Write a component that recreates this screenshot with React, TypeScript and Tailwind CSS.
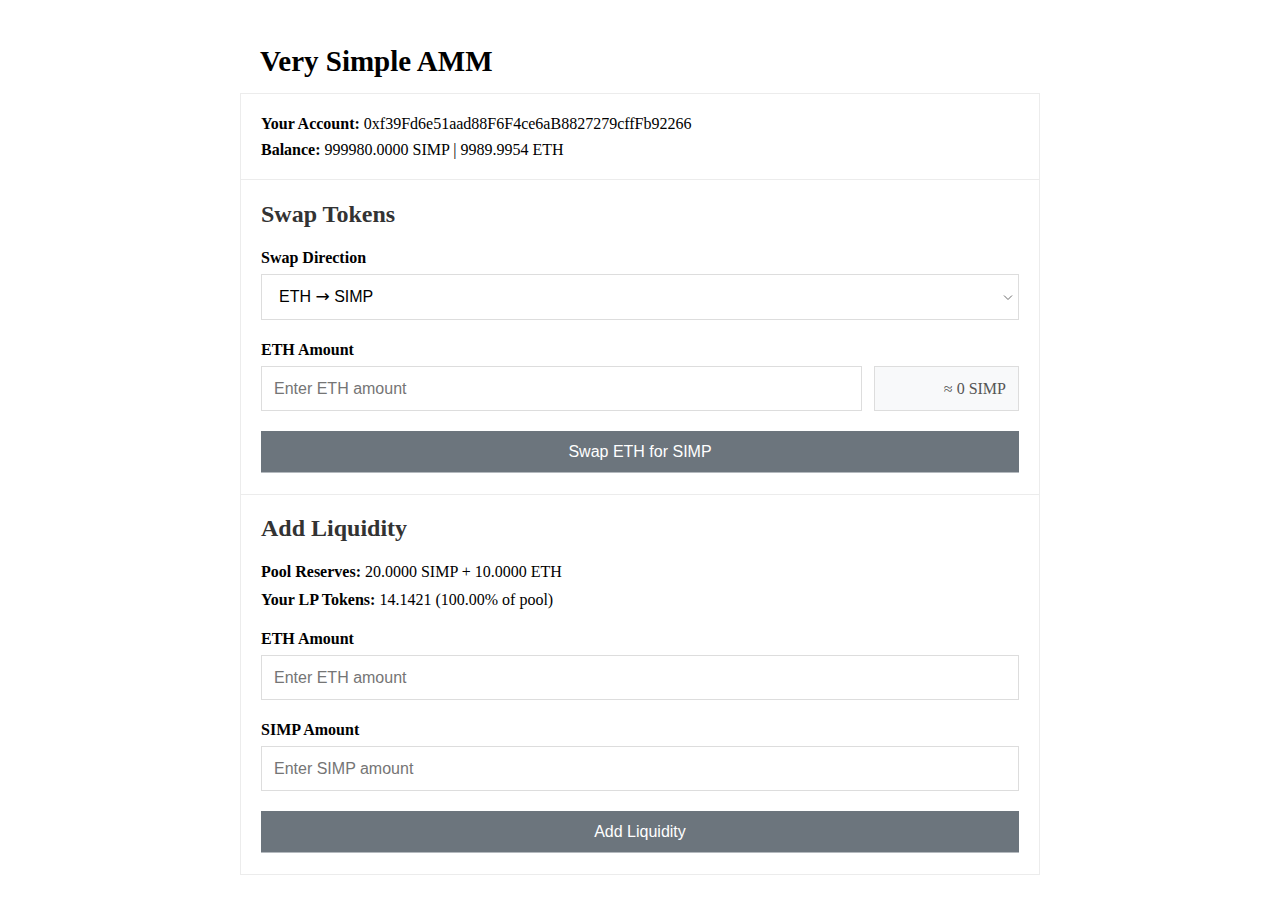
import React from "react";

const serif = "font-['Liberation_Serif','Times_New_Roman',serif]";
const sans = "font-['Liberation_Sans',Arial,sans-serif]";

function Label({ children }: { children: React.ReactNode }) {
  return (
    <label className={`block ${serif} text-[16px] leading-[22px] font-bold text-black mb-[5px]`}>
      {children}
    </label>
  );
}

function TextInput({ placeholder }: { placeholder: string }) {
  return (
    <input
      type="text"
      placeholder={placeholder}
      className={`block w-full h-[45px] px-[12px] border border-[#dddddd] bg-white ${sans} text-[16px] text-black placeholder:text-[#757575] outline-none`}
    />
  );
}

function Button({ children }: { children: React.ReactNode }) {
  return (
    <button
      className={`block w-full h-[42px] bg-[#6c757d] border-b border-b-[#b4b9be] ${sans} text-[16px] text-white text-center`}
    >
      {children}
    </button>
  );
}

export default function App() {
  return (
    <div className={`min-h-[903px] bg-white ${serif} text-black`}>
      <div className="w-[800px] mx-auto pt-[42px]">
        <h1 className="pl-[20px] text-[29px] leading-[38px] h-[38px] font-bold mb-[13px]">Very Simple AMM</h1>
        <div className="border border-[#ececec] flex flex-col">
          <div className="px-[20px] pt-[17px] pb-[17px] text-[16px] leading-[25.6px]">
            <div>
              <b>Your Account:</b> 0xf39Fd6e51aad88F6F4ce6aB8827279cffFb92266
            </div>
            <div>
              <b>Balance:</b> 999980.0000 SIMP | 9989.9954 ETH
            </div>
          </div>

          <div className="border-t border-[#ececec] px-[20px] pt-[20px] pb-[21px]">
            <h2 className="mt-[2px] text-[24px] leading-[24px] font-bold text-[#333333] mb-[21px]">Swap Tokens</h2>
            <div className="mb-[19px]">
              <Label>Swap Direction</Label>
              <div
                role="combobox"
                className={`w-full h-[46px] pl-[17px] pr-[5px] border border-[#dddddd] bg-white flex items-center justify-between ${sans} text-[16px] text-black`}
              >
                <span>
                  ETH <span className="font-['DejaVu_Sans',sans-serif] text-[17px]">→</span> SIMP
                </span>
                <svg width="10" height="7" viewBox="0 0 10 7" fill="none">
                  <path d="M1 1.5 L5 5.5 L9 1.5" stroke="#6b6b6b" strokeWidth="1" />
                </svg>
              </div>
            </div>
            <div className="mb-[20px]">
              <Label>ETH Amount</Label>
              <div className="flex gap-[12px]">
                <div className="flex-1">
                  <TextInput placeholder="Enter ETH amount" />
                </div>
                <div className="w-[145px] h-[45px] border border-[#dddddd] bg-[#f8f9fa] flex items-center justify-end pr-[12px] text-[16px] text-[#555555]">
                  ≈ 0 SIMP
                </div>
              </div>
            </div>
            <Button>Swap ETH for SIMP</Button>
          </div>

          <div className="border-t border-[#ececec] px-[20px] pt-[20px] pb-[21px]">
            <h2 className="mt-[1px] text-[24px] leading-[24px] font-bold text-[#333333] mb-[18px]">Add Liquidity</h2>
            <div className="text-[16px] leading-[28px] mb-[14px]">
              <div>
                <b>Pool Reserves:</b> 20.0000 SIMP + 10.0000 ETH
              </div>
              <div>
                <b>Your LP Tokens:</b> 14.1421 (100.00% of pool)
              </div>
            </div>
            <div className="mb-[19px]">
              <Label>ETH Amount</Label>
              <TextInput placeholder="Enter ETH amount" />
            </div>
            <div className="mb-[20px]">
              <Label>SIMP Amount</Label>
              <TextInput placeholder="Enter SIMP amount" />
            </div>
            <Button>Add Liquidity</Button>
          </div>
        </div>
      </div>
    </div>
  );
}
